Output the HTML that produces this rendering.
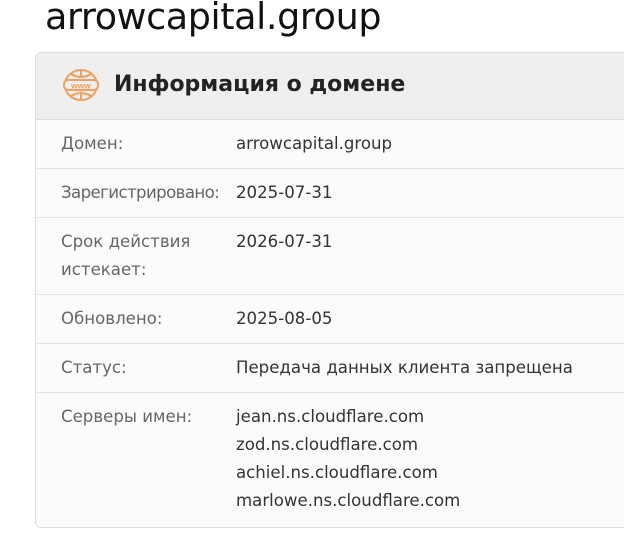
<!DOCTYPE html><html><head><style>
body{margin:0;background:#fff;font-family:"DejaVu Sans",sans-serif;width:624px;height:539px;overflow:hidden;position:relative}
h1{position:absolute;left:45px;top:-5px;margin:0;font-weight:400;font-size:36.5px;color:#111;letter-spacing:-0.4px}
.card{position:absolute;left:35px;top:52px;width:640px;height:474px;border:1px solid #ddd;border-radius:6px;background:#fbfbfb;overflow:hidden}
.hd{height:66px;background:#efefef;border-bottom:1px solid #ddd;position:relative}
.hd span{position:absolute;left:78px;top:19px;font-weight:700;color:#222;font-size:22px}
.row{position:relative;border-bottom:1px solid #e3e3e3;font-size:16.6px;line-height:28px}
.row:last-child{border-bottom:none}
.l{position:absolute;left:25px;color:#666;top:10px}
.v{position:absolute;left:200px;color:#333;top:10px}
</style></head><body>
<h1>arrowcapital.group</h1>
<div class="card">
<div class="hd"><svg style="position:absolute;left:26px;top:15px" width="38" height="34" viewBox="0 0 38 34" fill="none" stroke="#f0a060" stroke-width="2"><ellipse cx="19" cy="17" rx="16" ry="15"/><path d="M9 6 Q19 12 29 6 M9 28 Q19 22 29 28 M19 2 V10 M19 24 V32"/><rect x="2" y="12" width="34" height="10" rx="4" fill="#efefef"/><text x="19" y="20.5" font-size="8.5" font-weight="700" fill="#f0a060" stroke="none" text-anchor="middle" font-family="Liberation Sans">www</text></svg><span>Информация о домене</span></div>
<div class="row" style="height:48px"><div class="l">Домен:</div><div class="v">arrowcapital.group</div></div>
<div class="row" style="height:48px"><div class="l" style="letter-spacing:-0.6px">Зарегистрировано:</div><div class="v">2025-07-31</div></div>
<div class="row" style="height:76px"><div class="l">Срок действия<br>истекает:</div><div class="v">2026-07-31</div></div>
<div class="row" style="height:48px"><div class="l">Обновлено:</div><div class="v">2025-08-05</div></div>
<div class="row" style="height:48px"><div class="l">Статус:</div><div class="v">Передача данных клиента запрещена</div></div>
<div class="row" style="height:130px"><div class="l">Серверы имен:</div><div class="v">jean.ns.cloudflare.com<br>zod.ns.cloudflare.com<br>achiel.ns.cloudflare.com<br>marlowe.ns.cloudflare.com</div></div>
</div>
</body></html>
